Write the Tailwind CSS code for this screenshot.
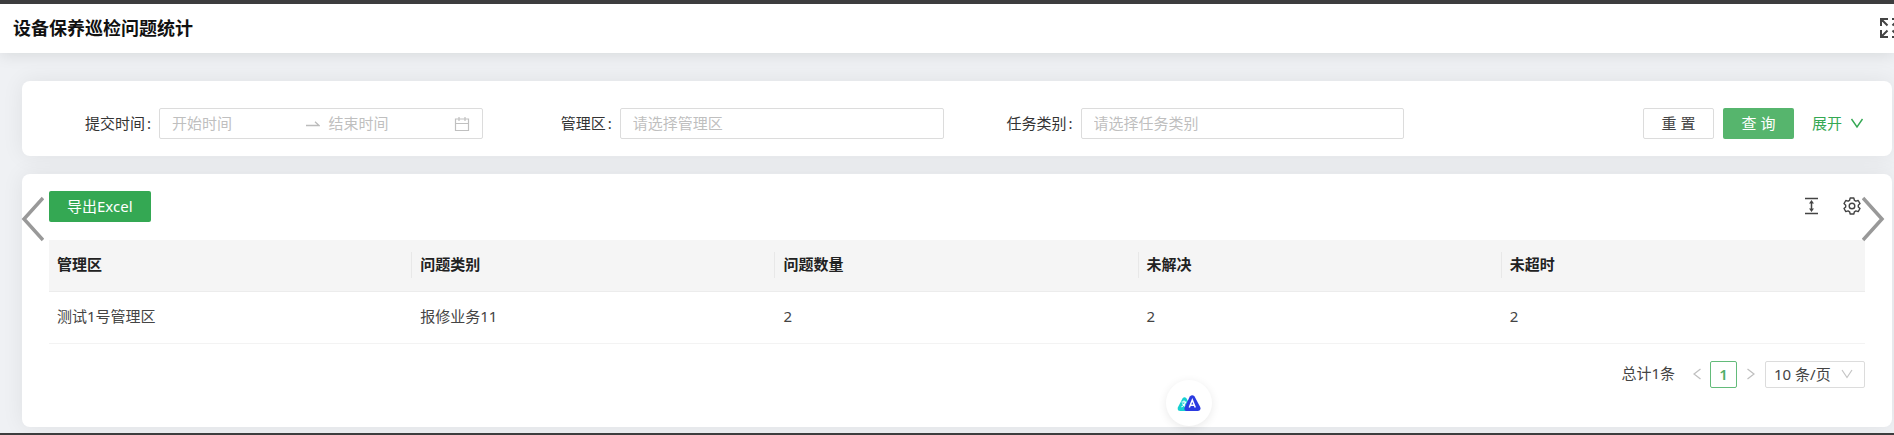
<!DOCTYPE html>
<html lang="zh-CN">
<head>
<meta charset="utf-8">
<meta name="viewport" content="width=device-width, initial-scale=1">
<title>设备保养巡检问题统计</title>
<script src="https://cdn.jsdelivr.net/npm/@tailwindcss/browser@4"></script>
</head>
<body class="flex min-h-screen flex-col overflow-x-hidden border-t-4 border-b-2 border-[#3d3d3e] bg-[#eff1f4] font-['Noto_Sans','Noto_Sans_CJK_SC',sans-serif] text-[15px] leading-6 text-[#444]">

<header class="relative flex h-[49px] shrink-0 items-center justify-between overflow-x-clip bg-white pl-[13px] shadow-[0_2px_16px_rgba(0,20,10,0.1)]">
  <h1 class="pb-0.5 text-lg leading-6 font-bold text-[#111]">设备保养巡检问题统计</h1>
  <button type="button" aria-label="全屏" class="-mr-1.5 shrink-0 pb-0.5 text-[#444]">
    <svg class="h-5 w-5" viewBox="0 0 20 20" fill="none" stroke="currentColor" stroke-width="2">
      <path d="M1 8V1h7M1 1l6.500 6.500M12 1h7v7M19 1l-6.500 6.500M1 12v7h7M1 19l6.500-6.500M19 12v7h-7M19 19l-6.500-6.500"/>
    </svg>
  </button>
</header>

<main class="relative flex grow flex-col gap-[18px] pt-7 pr-0.5 pb-1.5 pl-[22px]">
  <form class="grid grid-cols-4 gap-x-[27px] rounded-lg bg-white px-[27px] pt-[27px] pb-[17px] shadow-[0_0_22px_rgba(0,0,0,0.07)]">
    <div class="flex h-[31px] items-center">
      <label for="start" class="w-[110px] shrink-0 pr-1.5 pb-0.5 text-right text-[#333]">提交时间<span class="px-0.5">:</span></label>
      <div class="flex h-[31px] min-w-0 grow items-center rounded-xs border border-[#dcdcdc] px-3">
        <input id="start" type="text" placeholder="开始时间" class="w-0 min-w-0 grow pb-0.5 placeholder:text-[#bfbfbf] focus:outline-none">
        <svg class="mr-2 ml-2 h-[15px] w-[15px] shrink-0 text-[#bcbcbc]" viewBox="0 0 15 15" fill="none" stroke="currentColor" stroke-width="1.3"><path d="M1 9.5h13L10 5.700"/></svg>
        <input aria-label="结束时间" type="text" placeholder="结束时间" class="w-0 min-w-0 grow pb-0.5 placeholder:text-[#bfbfbf] focus:outline-none">
        <svg class="h-4 w-4 shrink-0 text-[#c0c0c0]" viewBox="0 0 16 16" fill="none" stroke="currentColor" stroke-width="1.2"><path d="M1.500 3h13v11.500h-13zM1.500 7.500h13M5 1v4M11 1v4"/></svg>
      </div>
    </div>
    <div class="flex h-[31px] items-center">
      <label for="area" class="w-[110px] shrink-0 pr-1.5 pb-0.5 text-right text-[#333]">管理区<span class="px-0.5">:</span></label>
      <input id="area" type="text" placeholder="请选择管理区" class="h-[31px] w-0 min-w-0 grow rounded-xs border border-[#dcdcdc] px-3 pb-0.5 placeholder:text-[#bfbfbf]">
    </div>
    <div class="flex h-[31px] items-center">
      <label for="kind" class="w-[110px] shrink-0 pr-1.5 pb-0.5 text-right text-[#333]">任务类别<span class="px-0.5">:</span></label>
      <input id="kind" type="text" placeholder="请选择任务类别" class="h-[31px] w-0 min-w-0 grow rounded-xs border border-[#dcdcdc] px-3 pb-0.5 placeholder:text-[#bfbfbf]">
    </div>
    <div class="flex h-[31px] items-center justify-end">
      <button type="reset" class="mr-[9px] h-[31px] w-[71px] rounded-xs border border-[#dcdcdc] bg-white pb-0.5">重 置</button>
      <button type="submit" class="mr-[18px] h-[31px] w-[71px] rounded-xs bg-[#56b56d] pb-0.5 text-white">查 询</button>
      <button type="button" class="flex items-center gap-2 pr-px pb-0.5 text-[#34a853]">展开
        <svg class="h-[14px] w-[14px]" viewBox="0 0 14 14" fill="none" stroke="currentColor" stroke-width="1.400"><path d="M1.500 3l5.500 8 5.500-8"/></svg>
      </button>
    </div>
  </form>

  <section class="grow rounded-lg bg-white px-[27px] pt-[17px] shadow-[0_0_22px_rgba(0,0,0,0.07)]">
    <div class="flex items-center justify-between">
      <button type="button" class="h-[31px] rounded-xs bg-[#34a853] px-[18px] pb-0.5 text-white">导出Excel</button>
      <div class="flex items-center gap-6 pr-1 pb-0.5 text-[#444]">
        <button type="button" aria-label="密度">
          <svg class="h-[18px] w-[15px]" viewBox="0 0 15 18" fill="none" stroke="currentColor" stroke-width="1.500"><path d="M1 1.500h13M1 16.500h13M7.500 5v8"/><path fill="currentColor" stroke="none" d="M7.500 3l2.500 3.500H5zM7.500 15l2.500-3.500H5z"/></svg>
        </button>
        <button type="button" aria-label="列设置">
          <svg class="h-[18px] w-[18px]" viewBox="0 0 18 18" fill="none" stroke="currentColor" stroke-width="1.400" stroke-linejoin="round"><path d="M7.200 1h3.600l.6 2.300 1.500.9 2.300-.7 1.800 3.100-1.700 1.600v1.700l1.700 1.600-1.800 3.100-2.300-.7-1.500.9-.6 2.200H7.200l-.6-2.200-1.500-.9-2.300.7L1 11.500l1.700-1.600V8.200L1 6.600l1.800-3.100 2.300.7 1.500-.9z"/><circle cx="9" cy="9" r="2.800"/></svg>
        </button>
      </div>
    </div>

    <table class="mt-[18px] w-full table-fixed border-collapse text-left">
      <thead>
        <tr class="h-[51px] border-b border-[#ececec] bg-[#f5f5f5] text-[#222]">
          <th class="p-0"><div class="px-2 pb-0.5">管理区</div></th>
          <th class="p-0"><div class="-ml-px border-l border-[#e8e8e8] px-2 pb-0.5">问题类别</div></th>
          <th class="p-0"><div class="-ml-px border-l border-[#e8e8e8] px-2 pb-0.5">问题数量</div></th>
          <th class="p-0"><div class="-ml-px border-l border-[#e8e8e8] px-2 pb-0.5">未解决</div></th>
          <th class="p-0"><div class="-ml-px border-l border-[#e8e8e8] px-2 pb-0.5">未超时</div></th>
        </tr>
      </thead>
      <tbody>
        <tr class="h-[52px] border-b border-[#f3f3f3]">
          <td class="px-2 pb-0.5">测试1号管理区</td>
          <td class="px-2 pb-0.5">报修业务11</td>
          <td class="px-2 pb-0.5">2</td>
          <td class="px-2 pb-0.5">2</td>
          <td class="px-2 pb-0.5">2</td>
        </tr>
      </tbody>
    </table>

    <nav aria-label="分页" class="mt-[17px] flex h-[27px] items-center justify-end">
      <span class="mr-2 pb-0.5">总计1条</span>
      <button type="button" aria-label="上一页" class="flex h-[27px] w-[27px] items-center justify-center text-[#c0c0c0]">
        <svg class="h-3 w-2" viewBox="0 0 8 12" fill="none" stroke="currentColor" stroke-width="1.300"><path d="M7.500 1L1 6l6.500 5"/></svg>
      </button>
      <button type="button" aria-current="page" class="h-[27px] w-[27px] rounded-xs border border-[#63bb7a] leading-none font-semibold text-[#4fae69]">1</button>
      <button type="button" aria-label="下一页" class="mr-px flex h-[27px] w-[27px] items-center justify-center text-[#c0c0c0]">
        <svg class="h-3 w-2" viewBox="0 0 8 12" fill="none" stroke="currentColor" stroke-width="1.300"><path d="M.5 1L7 6 .5 11"/></svg>
      </button>
      <div class="relative">
        <select aria-label="每页条数" class="block h-[27px] w-[100px] appearance-none rounded-xs border border-[#dcdcdc] bg-white pb-0.5 pl-2">
          <option>10 条/页</option>
          <option>20 条/页</option>
          <option>50 条/页</option>
        </select>
        <svg class="pointer-events-none absolute top-[7px] right-3 h-3 w-3 text-[#c4c4c4]" viewBox="0 0 12 12" fill="none" stroke="currentColor" stroke-width="1.200"><path d="M1 2l5 7.500L11 2"/></svg>
      </div>
    </nav>
  </section>

  <button type="button" aria-label="向左" class="absolute top-[143px] left-5 text-[#999]">
    <svg class="h-[46px] w-6" viewBox="0 0 24 46" fill="none" stroke="currentColor" stroke-width="3.500"><path d="M23 2L4 23l19 21"/></svg>
  </button>
  <button type="button" aria-label="向右" class="absolute top-[143px] right-2 text-[#999]">
    <svg class="h-[46px] w-6" viewBox="0 0 24 46" fill="none" stroke="currentColor" stroke-width="3.500"><path d="M1 2l19 21L1 44"/></svg>
  </button>
</main>

<button type="button" aria-label="翻译" class="fixed bottom-[9px] left-[1166px] flex h-[46px] w-[46px] items-center justify-center rounded-full bg-white shadow-[0_2px_10px_rgba(0,0,0,0.09)]">
  <svg class="h-4 w-6" viewBox="0 0 24 16">
    <path fill="#16d0d0" d="M5.500 3.500Q7.500 1 9.500 3.500L14 12l-2 4H3.500Q0 16 .8 12.500z"/>
    <path fill="none" stroke="#fff" stroke-width="1.100" d="M4.500 7h5M7 5.500V7M8.700 7Q7.500 10.500 4.500 12M5.500 8.500Q6.500 10.500 8.500 11.500"/>
    <path fill="#2b3be0" d="M12.800 1.500Q15.300-1 17.600 1.500L23.200 12Q24.500 15.600 21 16H9Q6.500 15.500 7.800 12z"/>
    <path fill="none" stroke="#fff" stroke-width="1.500" d="M12.300 12.500l3-7.500 3 7.500M13.300 10.200h4"/>
  </svg>
</button>
</body>
</html>
